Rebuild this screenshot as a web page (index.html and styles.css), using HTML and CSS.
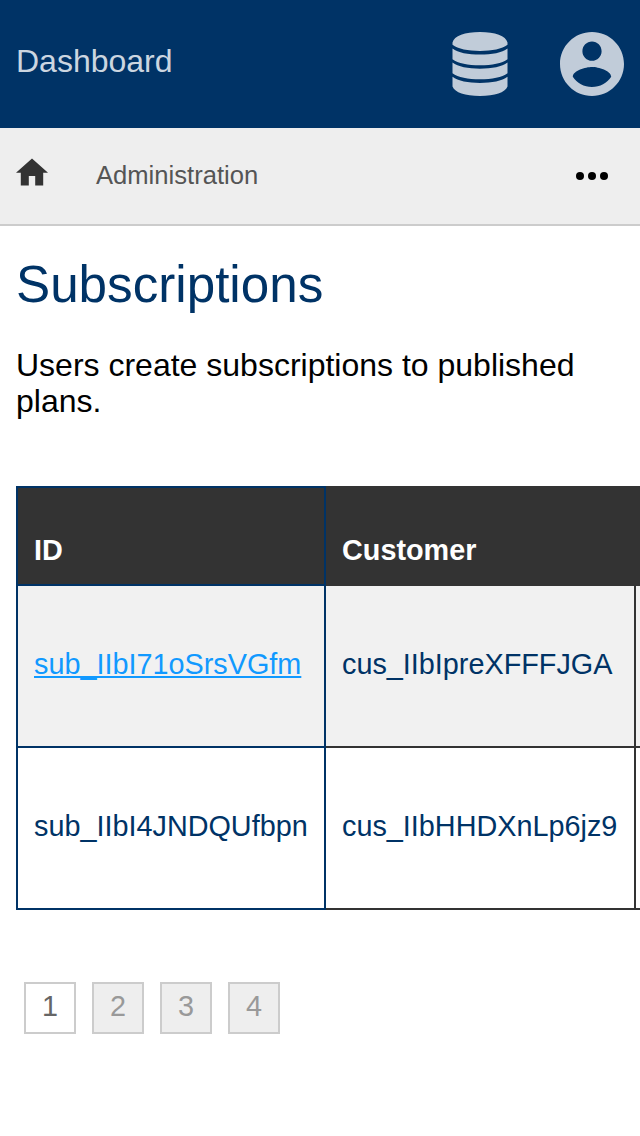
FILE: index.html
```html
<!DOCTYPE html>
<html lang="en">
<head>
<meta charset="utf-8">
<title>Subscriptions</title>
<link rel="stylesheet" href="styles.css">
</head>
<body>
<header class="topbar">
  <span class="brand">Dashboard</span>
  <div class="actions">
    <svg class="icon-db" viewBox="0 0 56 64"><path d="M.5 10.500C2 4 13 0 28 0s26 4 27.500 10.500v2.300C50 17 40 18.900 28 18.900S6 17 .5 12.800zM.5 16.400C6 20.600 16 22.500 28 22.500s22-1.900 27.500-6.100v10.800C50 31.400 40 33.300 28 33.300S6 31.400.5 27.200zM.5 30.600C6 34.800 16 36.700 28 36.700s22-1.900 27.500-6.100v10.600C50 45.400 40 47.300 28 47.300S6 45.400.5 41.200zM.5 44.800C6 49 16 50.900 28 50.900s22-1.900 27.500-6.100v9.700C53 60.500 43 64 28 64S3 60.500.5 54.500z"/></svg>
    <svg class="icon-user" viewBox="2 2 20 20"><path d="M12 2C6.480 2 2 6.480 2 12s4.480 10 10 10 10-4.480 10-10S17.520 2 12 2zm0 3c1.660 0 3 1.340 3 3s-1.340 3-3 3-3-1.340-3-3 1.340-3 3-3zm0 14.200c-2.500 0-4.710-1.280-6-3.220.03-1.990 4-3.080 6-3.080 1.990 0 5.970 1.090 6 3.080-1.290 1.940-3.500 3.220-6 3.220z"/></svg>
  </div>
</header>
<nav class="crumbs">
  <svg class="icon-home" viewBox="2 2.75 20 17.5"><path d="M10 20v-6h4v6h5v-8h3L12 3 2 12h3v8z"/></svg>
  <span class="crumb">Administration</span>
  <svg class="icon-more" viewBox="0 0 32 8"><circle cx="4" cy="4" r="4"/><circle cx="16" cy="4" r="4"/><circle cx="28" cy="4" r="4"/></svg>
</nav>
<main class="content">
  <h1 class="title">Subscriptions</h1>
  <p class="intro">Users create subscriptions to published plans.</p>
  <div class="table">
    <div class="row head"><div class="cell first">ID</div><div class="cell">Customer</div><div class="cell"></div></div>
    <div class="row shaded"><div class="cell first"><a class="link" href="#">sub_IIbI71oSrsVGfm</a></div><div class="cell">cus_IIbIpreXFFFJGA</div><div class="cell"></div></div>
    <div class="row"><div class="cell first">sub_IIbI4JNDQUfbpn</div><div class="cell">cus_IIbHHDXnLp6jz9</div><div class="cell"></div></div>
  </div>
  <div class="pager"><span class="page current">1</span><span class="page">2</span><span class="page">3</span><span class="page">4</span></div>
</main>
</body>
</html>
```
FILE: styles.css
```css
* { box-sizing: border-box; }
body {
  margin: 0;
  min-height: 1136px;
  background: #fff;
  color: #000;
  font-family: "Liberation Sans", Arial, sans-serif;
  font-size: 32px;
  overflow: hidden;
}
svg { display: block; flex: none; }
.topbar {
  display: flex;
  align-items: center;
  justify-content: space-between;
  height: 128px;
  padding: 0 16px;
  background: #036;
}
.brand { padding-bottom: 6px; line-height: 36px; color: #ccd6e0; }
.actions { display: flex; gap: 52px; fill: #c1ccd9; }
.icon-db { width: 56px; height: 64px; }
.icon-user { width: 64px; height: 64px; }
.crumbs {
  display: flex;
  align-items: center;
  height: 98px;
  padding: 0 32px 0 16px;
  background: #eee;
  border-bottom: 2px solid #ccc;
}
.icon-home { width: 32px; height: 28px; margin-bottom: 8px; fill: #333; }
.crumb { flex: 1; margin-left: 48px; padding-bottom: 2px; font-size: 25.6px; line-height: 30px; color: #555; }
.icon-more { width: 32px; height: 8px; }
.content { padding: 30px 0 0 16px; }
.title { margin: 0; font-size: 51.2px; font-weight: 400; line-height: 58px; color: #036; }
.intro { margin: 33px 16px 0 0; line-height: 36px; }
.table { margin-top: 67px; font-size: 28.8px; line-height: 32px; color: #036; }
.row { display: grid; grid-template-columns: 310px 310px 1fr; height: 162px; }
.cell {
  display: flex;
  align-items: center;
  padding: 0 16px 4px;
  border: solid #333;
  border-width: 0 2px 2px 0;
  white-space: nowrap;
}
.cell:last-child { padding: 0; border-right: 0; }
.first { border-color: #036; border-width: 0 2px 2px; }
.head { height: 100px; background: #333; color: #fff; font-weight: 700; }
.head .cell { align-items: flex-end; padding-bottom: 18px; }
.head .first { border-top-width: 2px; }
.shaded { background: #f1f1f1; }
.link { color: #1199ff; text-decoration: underline; }
.pager { display: flex; gap: 16px; padding: 72px 8px 0; font-size: 28.8px; }
.page {
  display: flex;
  align-items: center;
  justify-content: center;
  width: 52px;
  height: 52px;
  padding-bottom: 4px;
  border: 2px solid #ccc;
  background: #eee;
  color: #999;
}
.current { background: #fff; color: #666; }
```
